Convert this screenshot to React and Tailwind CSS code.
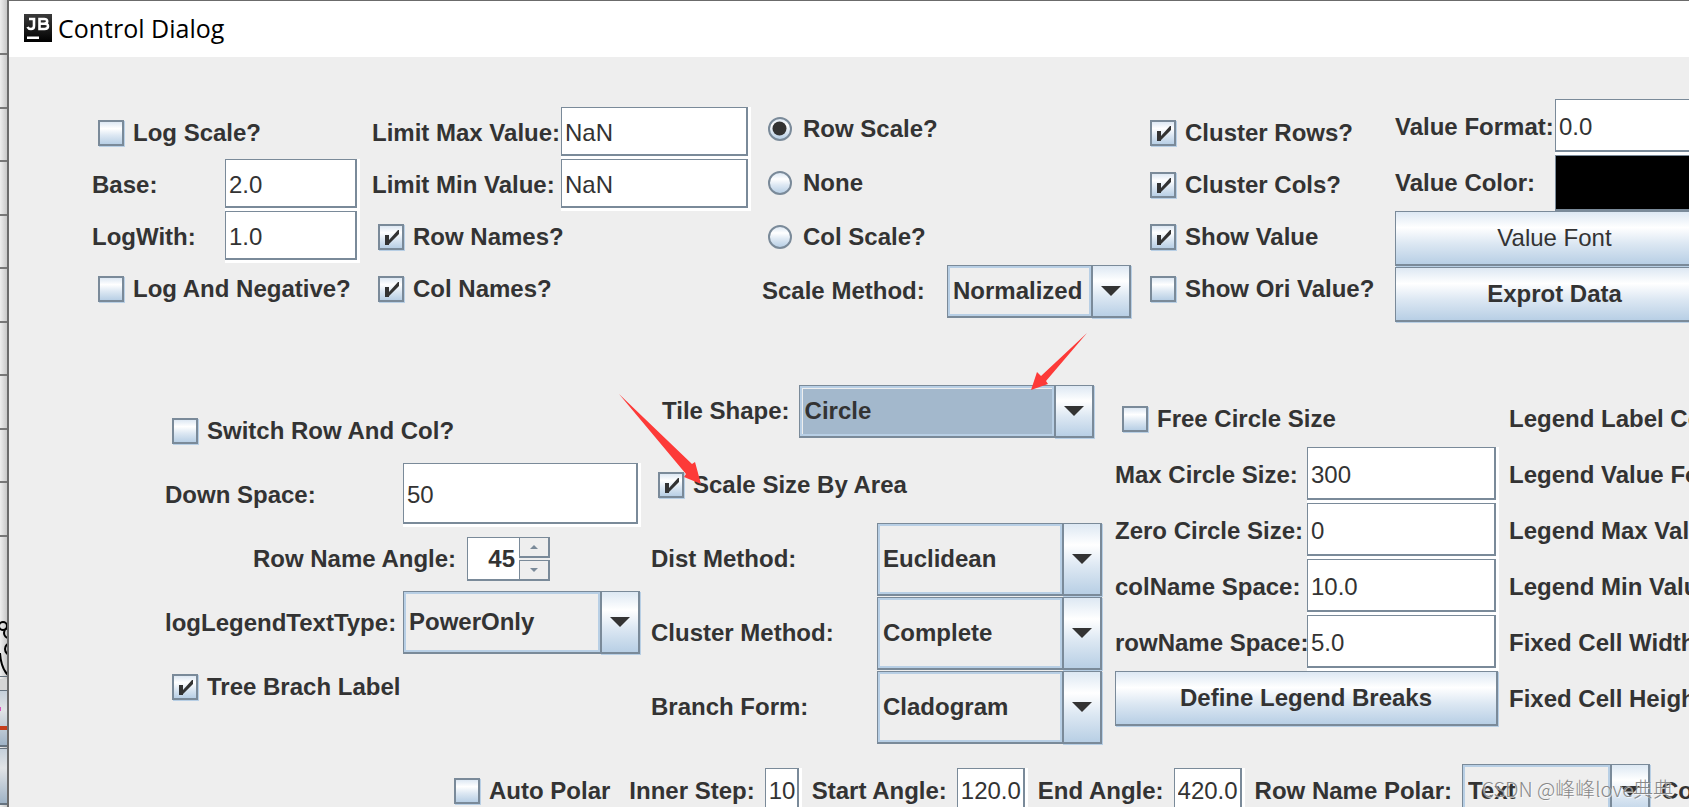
import React from 'react';

const LINES = [
  { id: 'l1', className: 'h-[55px]' },
  { id: 'l2', className: 'h-[54px]' },
  { id: 'l3', className: 'h-[53px]' },
  { id: 'l4', className: 'h-[54px]' },
  { id: 'l5', className: 'h-[53px]' },
  { id: 'l6', className: 'h-[54px]' },
  { id: 'l7', className: 'h-[53px]' },
  { id: 'l8', className: 'h-[54px]' },
  { id: 'l9', className: 'h-[53px]' },
  { id: 'l10', className: 'h-[54px]' },
];

const METAL = 'bg-[linear-gradient(to_bottom,#dde8f3_0%,#ffffff_30%,#dde8f3_60%,#b8cfe5_100%)]';

const Check = ({ id, label, checked = false, className = '' }) => (
  <div className={`flex items-center gap-[9px] ${className}`}>
    <span className="grid shrink-0">
      <input
        id={id}
        type="checkbox"
        defaultChecked={checked}
        className={`peer col-start-1 row-start-1 w-[26px] h-[26px] appearance-none border-2 border-[#7a8a99] shadow-[1px_1px_0_#b8cfe5] ${METAL}`}
      />
      <svg viewBox="0 0 26 26" className="pointer-events-none invisible peer-checked:visible col-start-1 row-start-1 w-[26px] h-[26px]">
        <path d="M7 11h4v5L20 6h1v4L11 20v1H7z" fill="#333" />
      </svg>
    </span>
    <label htmlFor={id} className="whitespace-nowrap">{label}</label>
  </div>
);

const Radio = ({ id, label, checked = false }) => (
  <div className="flex items-center gap-[11px] pl-[6px]">
    <span className="grid shrink-0">
      <input
        id={id}
        name="scale"
        type="radio"
        defaultChecked={checked}
        className={`peer col-start-1 row-start-1 w-6 h-6 appearance-none rounded-full border-2 border-[#7a8a99] ${METAL}`}
      />
      <svg viewBox="0 0 24 24" className="pointer-events-none invisible peer-checked:visible col-start-1 row-start-1 w-6 h-6">
        <circle cx="11.5" cy="11.5" r="7" fill="#333" />
      </svg>
    </span>
    <label htmlFor={id} className="whitespace-nowrap">{label}</label>
  </div>
);

const Field = ({ id, value, className = '' }) => (
  <span className={`flex bg-white pr-[3px] pb-[3px] ${className}`}>
    <input
      id={id}
      type="text"
      defaultValue={value}
      className="w-full min-w-0 border-t border-l border-r-2 border-b-2 border-[#7a8a99] bg-white pl-[3px] pt-1 font-normal outline-none"
    />
  </span>
);

const Label = ({ htmlFor, children, className = '' }) => (
  <label htmlFor={htmlFor} className={`self-center whitespace-nowrap ${className}`}>{children}</label>
);

const Combo = ({ id, value, active = false, className = '' }) => (
  <span className={`flex pr-px ${className}`}>
    <select
      id={id}
      defaultValue={value}
      className={`min-w-0 flex-1 appearance-none border-t border-l border-b-2 border-[#7a8a99] pl-[5px] font-bold outline-none ${active ? 'bg-[#a3b8cc] shadow-[inset_0_0_0_2px_#b8cfe5,inset_3px_3px_0_#eeeeee]' : 'bg-[#eeeeee] shadow-[inset_0_0_0_2px_#b8cfe5]'}`}
    >
      <option>{value}</option>
    </select>
    <span className={`pointer-events-none flex w-10 items-center justify-center border-t border-x-2 border-b-2 border-[#7a8a99] shadow-[1px_1px_0_#b8cfe5] ${METAL}`}>
      <svg viewBox="0 0 20 10" className="w-5 h-[10px]">
        <path d="M0 0h20L10 10z" fill="#333" />
      </svg>
    </span>
  </span>
);

const MetalButton = ({ children, className = '' }) => (
  <button type="button" className={`mr-px mb-px border-t border-l border-r-2 border-b-2 border-[#7a8a99] shadow-[1px_1px_0_#b8cfe5] ${METAL} ${className}`}>
    {children}
  </button>
);

const Spinner = ({ id, value }) => (
  <span className="flex h-11 w-[83px]">
    <input
      id={id}
      type="text"
      defaultValue={value}
      className="min-w-0 flex-1 border-t border-l border-b-2 border-[#7a8a99] bg-white pr-1 text-right font-bold outline-none"
    />
    <span className="flex w-[31px] flex-col gap-[2px]">
      <button type="button" aria-label="Increase" className="flex flex-1 items-center justify-center border-t border-l border-r-2 border-b-2 border-[#7a8a99]">
        <svg viewBox="0 0 8 4" className="w-2 h-1"><path d="M0 4h8L4 0z" fill="#7a8a99" /></svg>
      </button>
      <button type="button" aria-label="Decrease" className="flex flex-1 items-center justify-center border-t border-l border-r-2 border-b-2 border-[#7a8a99]">
        <svg viewBox="0 0 8 4" className="w-2 h-1"><path d="M0 0h8L4 4z" fill="#7a8a99" /></svg>
      </button>
    </span>
  </span>
);

// Slice of the main window that stays visible left of the dialog
const BackWindow = () => (
  <div className="w-[7px] shrink-0 bg-[linear-gradient(to_right,#eeeeee,#c8c8c8)]">
    {LINES.map((line) => (
      <div key={line.id} className={`border-b-2 border-[#777777] ${line.className}`} />
    ))}
    <svg viewBox="0 0 7 270" className="h-[270px] w-[7px]">
      <defs>
        <linearGradient id="back-metal" x1="0" y1="0" x2="0" y2="1">
          <stop offset="0" stopColor="#c5d0da" />
          <stop offset="0.35" stopColor="#e2e4e6" />
          <stop offset="1" stopColor="#9fb3c6" />
        </linearGradient>
      </defs>
      <g fill="none" stroke="#000" strokeWidth="2">
        <circle cx="3" cy="89" r="4" />
        <circle cx="9" cy="96" r="5" />
        <circle cx="11" cy="112" r="6" />
        <path d="M0 116Q1 131 8 138" />
      </g>
      <path d="M0 142h7v11H0z" fill="#d5d5d5" />
      <path d="M0 154h7v54H0z" fill="url(#back-metal)" />
      <path d="M0 170h1v4H0z" fill="#d957c0" />
      <path d="M0 189h7v4H0z" fill="#c43e1c" />
      <path d="M0 212h7v54H0z" fill="url(#back-metal)" />
      <path d="M0 139h7v1H0zM0 153h7v1H0zM0 208h7v2H0zM0 211h7v1H0zM0 266h7v2H0z" fill="#66737f" />
    </svg>
  </div>
);

const TitleBar = () => (
  <header className="flex h-14 items-center gap-[6px] bg-white pl-[15px] pb-[2px]">
    <svg viewBox="0 0 28 28" className="h-7 w-7">
      <defs>
        <linearGradient id="jb" x1="0" y1="0" x2="0" y2="1">
          <stop offset="0" stopColor="#3a3a3a" />
          <stop offset="1" stopColor="#000" />
        </linearGradient>
      </defs>
      <path d="M0 0h28v28H0z" fill="url(#jb)" />
      <g fill="none" stroke="#fff" strokeWidth="2.6">
        <path d="M5 5h5v7q0 3-3 3-2.500 0-3.500-2" />
        <path d="M15.500 5v10h5q3.500 0 3.500-2.700T20.500 9.700H16h4q3.200 0 3.200-2.400T20 5z" />
      </g>
      <path d="M3 22.500h12v2.500H3z" fill="#fff" />
    </svg>
    <h1 className="font-['Open_Sans',sans-serif] text-[25px] font-normal text-black">Control Dialog</h1>
  </header>
);

const ScaleSection = () => (
  <section className="flex items-start pl-[83px] pt-[42px]">
    <div className="mt-2 grid shrink-0 grid-cols-[133px_135px] grid-rows-[repeat(4,52px)]">
      <Check id="log-scale" label="Log Scale?" className="col-span-2 pl-[6px]" />
      <Label htmlFor="base">Base:</Label>
      <Field id="base" value="2.0" />
      <Label htmlFor="log-with">LogWith:</Label>
      <Field id="log-with" value="1.0" />
      <Check id="log-negative" label="Log And Negative?" className="col-span-2 pl-[6px]" />
    </div>
    <div className="ml-3 mt-2 grid shrink-0 grid-cols-[189px_190px] grid-rows-[repeat(4,52px)]">
      <Label htmlFor="limit-max">Limit Max Value:</Label>
      <Field id="limit-max" value="NaN" />
      <Label htmlFor="limit-min">Limit Min Value:</Label>
      <Field id="limit-min" value="NaN" />
      <Check id="row-names" label="Row Names?" checked className="col-span-2 pl-[6px]" />
      <Check id="col-names" label="Col Names?" checked className="col-span-2 pl-[6px]" />
    </div>
    <div className="ml-[11px] mt-[3px] w-[370px] shrink-0">
      <div className="grid grid-rows-[repeat(3,54px)]">
        <Radio id="row-scale" label="Row Scale?" checked />
        <Radio id="no-scale" label="None" />
        <Radio id="col-scale" label="Col Scale?" />
      </div>
      <div className="flex h-[54px] justify-between">
        <Label htmlFor="scale-method">Scale Method:</Label>
        <Combo id="scale-method" value="Normalized" className="w-[185px] pt-px" />
      </div>
    </div>
    <div className="ml-[18px] mt-2 grid w-[245px] shrink-0 grid-rows-[repeat(4,52px)]">
      <Check id="cluster-rows" label="Cluster Rows?" checked />
      <Check id="cluster-cols" label="Cluster Cols?" checked />
      <Check id="show-value" label="Show Value" checked />
      <Check id="show-ori" label="Show Ori Value?" />
    </div>
    <div className="grid shrink-0 grid-cols-[160px_161px] grid-rows-[repeat(4,56px)]">
      <Label htmlFor="value-format">Value Format:</Label>
      <Field id="value-format" value="0.0" />
      <Label htmlFor="value-color">Value Color:</Label>
      <button id="value-color" type="button" className="border-t border-l border-b-2 border-[#7a8a99] bg-black" />
      <MetalButton className="col-span-2 font-normal">Value Font</MetalButton>
      <MetalButton className="col-span-2">Exprot Data</MetalButton>
    </div>
  </section>
);

const LegendLabels = () => (
  <div className="ml-[10px] mt-[17px] grid shrink-0 grid-rows-[repeat(6,56px)] items-center whitespace-nowrap">
    <span>Legend Label Color:</span>
    <span>Legend Value Format:</span>
    <span>Legend Max Value:</span>
    <span>Legend Min Value:</span>
    <span>Fixed Cell Width:</span>
    <span>Fixed Cell Height:</span>
  </div>
);

const ShapeSection = () => (
  <section className="mt-[51px] flex items-start pl-[156px]">
    <div className="mt-[25px] grid shrink-0 grid-cols-[238px_238px] grid-rows-[repeat(5,64px)]">
      <Check id="switch-row-col" label="Switch Row And Col?" className="col-span-2 pl-[7px]" />
      <Label htmlFor="down-space">Down Space:</Label>
      <Field id="down-space" value="50" />
      <div className="col-span-2 flex items-center justify-center gap-[11px] pr-[3px]">
        <Label htmlFor="row-angle">Row Name Angle:</Label>
        <Spinner id="row-angle" value="45" />
      </div>
      <Label htmlFor="log-legend">logLegendTextType:</Label>
      <Combo id="log-legend" value="PowerOnly" className="pb-px" />
      <Check id="tree-label" label="Tree Brach Label" checked className="col-span-2 pl-[7px]" />
    </div>
    <div className="ml-[10px] grid shrink-0 grid-cols-[226px_226px] grid-rows-[repeat(5,74px)]">
      <div className="col-span-2 flex items-center gap-[9px] pl-[11px]">
        <Label htmlFor="tile-shape">Tile Shape:</Label>
        <Combo id="tile-shape" value="Circle" active className="h-[54px] w-[296px] pt-px" />
      </div>
      <Check id="scale-area" label="Scale Size By Area" checked className="col-span-2 pl-[7px]" />
      <Label htmlFor="dist-method">Dist Method:</Label>
      <Combo id="dist-method" value="Euclidean" className="pt-px" />
      <Label htmlFor="cluster-method">Cluster Method:</Label>
      <Combo id="cluster-method" value="Complete" className="pt-px" />
      <Label htmlFor="branch-form">Branch Form:</Label>
      <Combo id="branch-form" value="Cladogram" className="pt-px" />
    </div>
    <div className="ml-3 mt-[17px] grid shrink-0 grid-cols-[192px_192px] grid-rows-[repeat(6,56px)]">
      <Check id="free-circle" label="Free Circle Size" className="col-span-2 pl-[7px]" />
      <Label htmlFor="max-circle">Max Circle Size:</Label>
      <Field id="max-circle" value="300" />
      <Label htmlFor="zero-circle">Zero Circle Size:</Label>
      <Field id="zero-circle" value="0" />
      <Label htmlFor="col-space">colName Space:</Label>
      <Field id="col-space" value="10.0" />
      <Label htmlFor="row-space">rowName Space:</Label>
      <Field id="row-space" value="5.0" />
      <MetalButton className="col-span-2">Define Legend Breaks</MetalButton>
    </div>
    <LegendLabels />
  </section>
);

const PolarSection = () => (
  <section className="mt-5 flex items-center gap-[10px] pl-[445px]">
    <Check id="auto-polar" label="Auto Polar" className="mr-[9px] shrink-0" />
    <Label htmlFor="inner-step">Inner Step:</Label>
    <Field id="inner-step" value="10" className="h-[46px] w-[37px] shrink-0" />
    <Label htmlFor="start-angle">Start Angle:</Label>
    <Field id="start-angle" value="120.0" className="h-[46px] w-[71px] shrink-0" />
    <Label htmlFor="end-angle">End Angle:</Label>
    <Field id="end-angle" value="420.0" className="h-[46px] w-[71px] shrink-0" />
    <Label htmlFor="row-polar">Row Name Polar:</Label>
    <Combo id="row-polar" value="Text" className="h-[54px] w-[189px] shrink-0" />
    <span className="whitespace-nowrap">Col Name Polar:</span>
  </section>
);

const App = () => (
  <div className="relative flex h-screen overflow-hidden bg-[#eeeeee] font-['Liberation_Sans',Arial,sans-serif] text-[24px] leading-7 font-bold text-[#333333]">
    <BackWindow />
    <main className="min-w-0 flex-1 overflow-hidden border-l-2 border-t border-[#6b6b6b]">
      <TitleBar />
      <ScaleSection />
      <ShapeSection />
      <PolarSection />
    </main>

    {/* Hint arrows */}
    <svg viewBox="0 0 1100 500" className="pointer-events-none absolute left-0 top-0 h-[500px] w-[1100px]" fill="#fd3a38">
      <path d="M619 394L692 464L695 462L701 484L684 477L686 474z" />
      <path d="M1087 333L1046 381L1048 384L1031 390L1037 372L1041 376z" />
    </svg>

    <span className="pointer-events-none absolute bottom-1 right-4 font-['Noto_Sans_CJK_SC',sans-serif] text-[20px] font-light text-[#888888] [text-shadow:1px_1px_0_#ffffffaa]">
      CSDN @峰峰love典典
    </span>
  </div>
);

export default App;
